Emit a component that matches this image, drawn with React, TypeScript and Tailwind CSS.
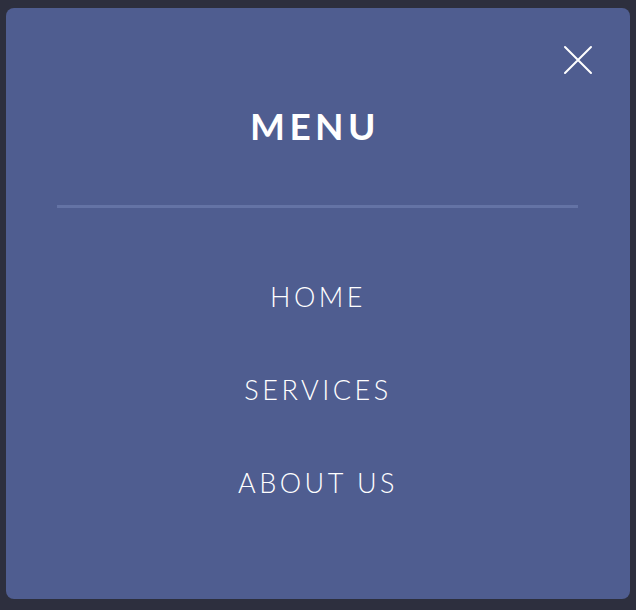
const links = ['HOME', 'SERVICES', 'ABOUT US'];

function CloseIcon() {
  return (
    <svg width="30" height="30" viewBox="0 0 30 30" fill="none" stroke="currentColor" strokeWidth="2" strokeLinecap="round">
      <path d="M2 2L28 28M28 2L2 28" />
    </svg>
  );
}

export default function App() {
  return (
    <div className="h-[610px] w-[636px] bg-[#2d2f3e] pl-[6px] pr-[6px] pt-[8px] pb-[11px]" style={{ fontFamily: 'Lato, "Open Sans", sans-serif' }}>
      <div className="relative flex h-full flex-col items-center rounded-[8px] bg-[#4f5d90] pt-[96px] text-white">
        <button className="absolute right-[37px] top-[37px] text-white" aria-label="Close menu">
          <CloseIcon />
        </button>

        <h2 className="ml-[-6px] text-[37px] font-bold leading-[44px] tracking-[0.12em]">MENU</h2>

        <div className="mt-[57px] h-[3px] w-[521px] ml-[-1px] bg-[#6473a5]" />

        <nav className="mt-[69px] flex flex-col items-center gap-[53px]">
          {links.map(link => (
            <a key={link} href="#" className="text-[27px] font-light leading-[40px] tracking-[0.13em]">
              {link}
            </a>
          ))}
        </nav>
      </div>
    </div>
  );
}
